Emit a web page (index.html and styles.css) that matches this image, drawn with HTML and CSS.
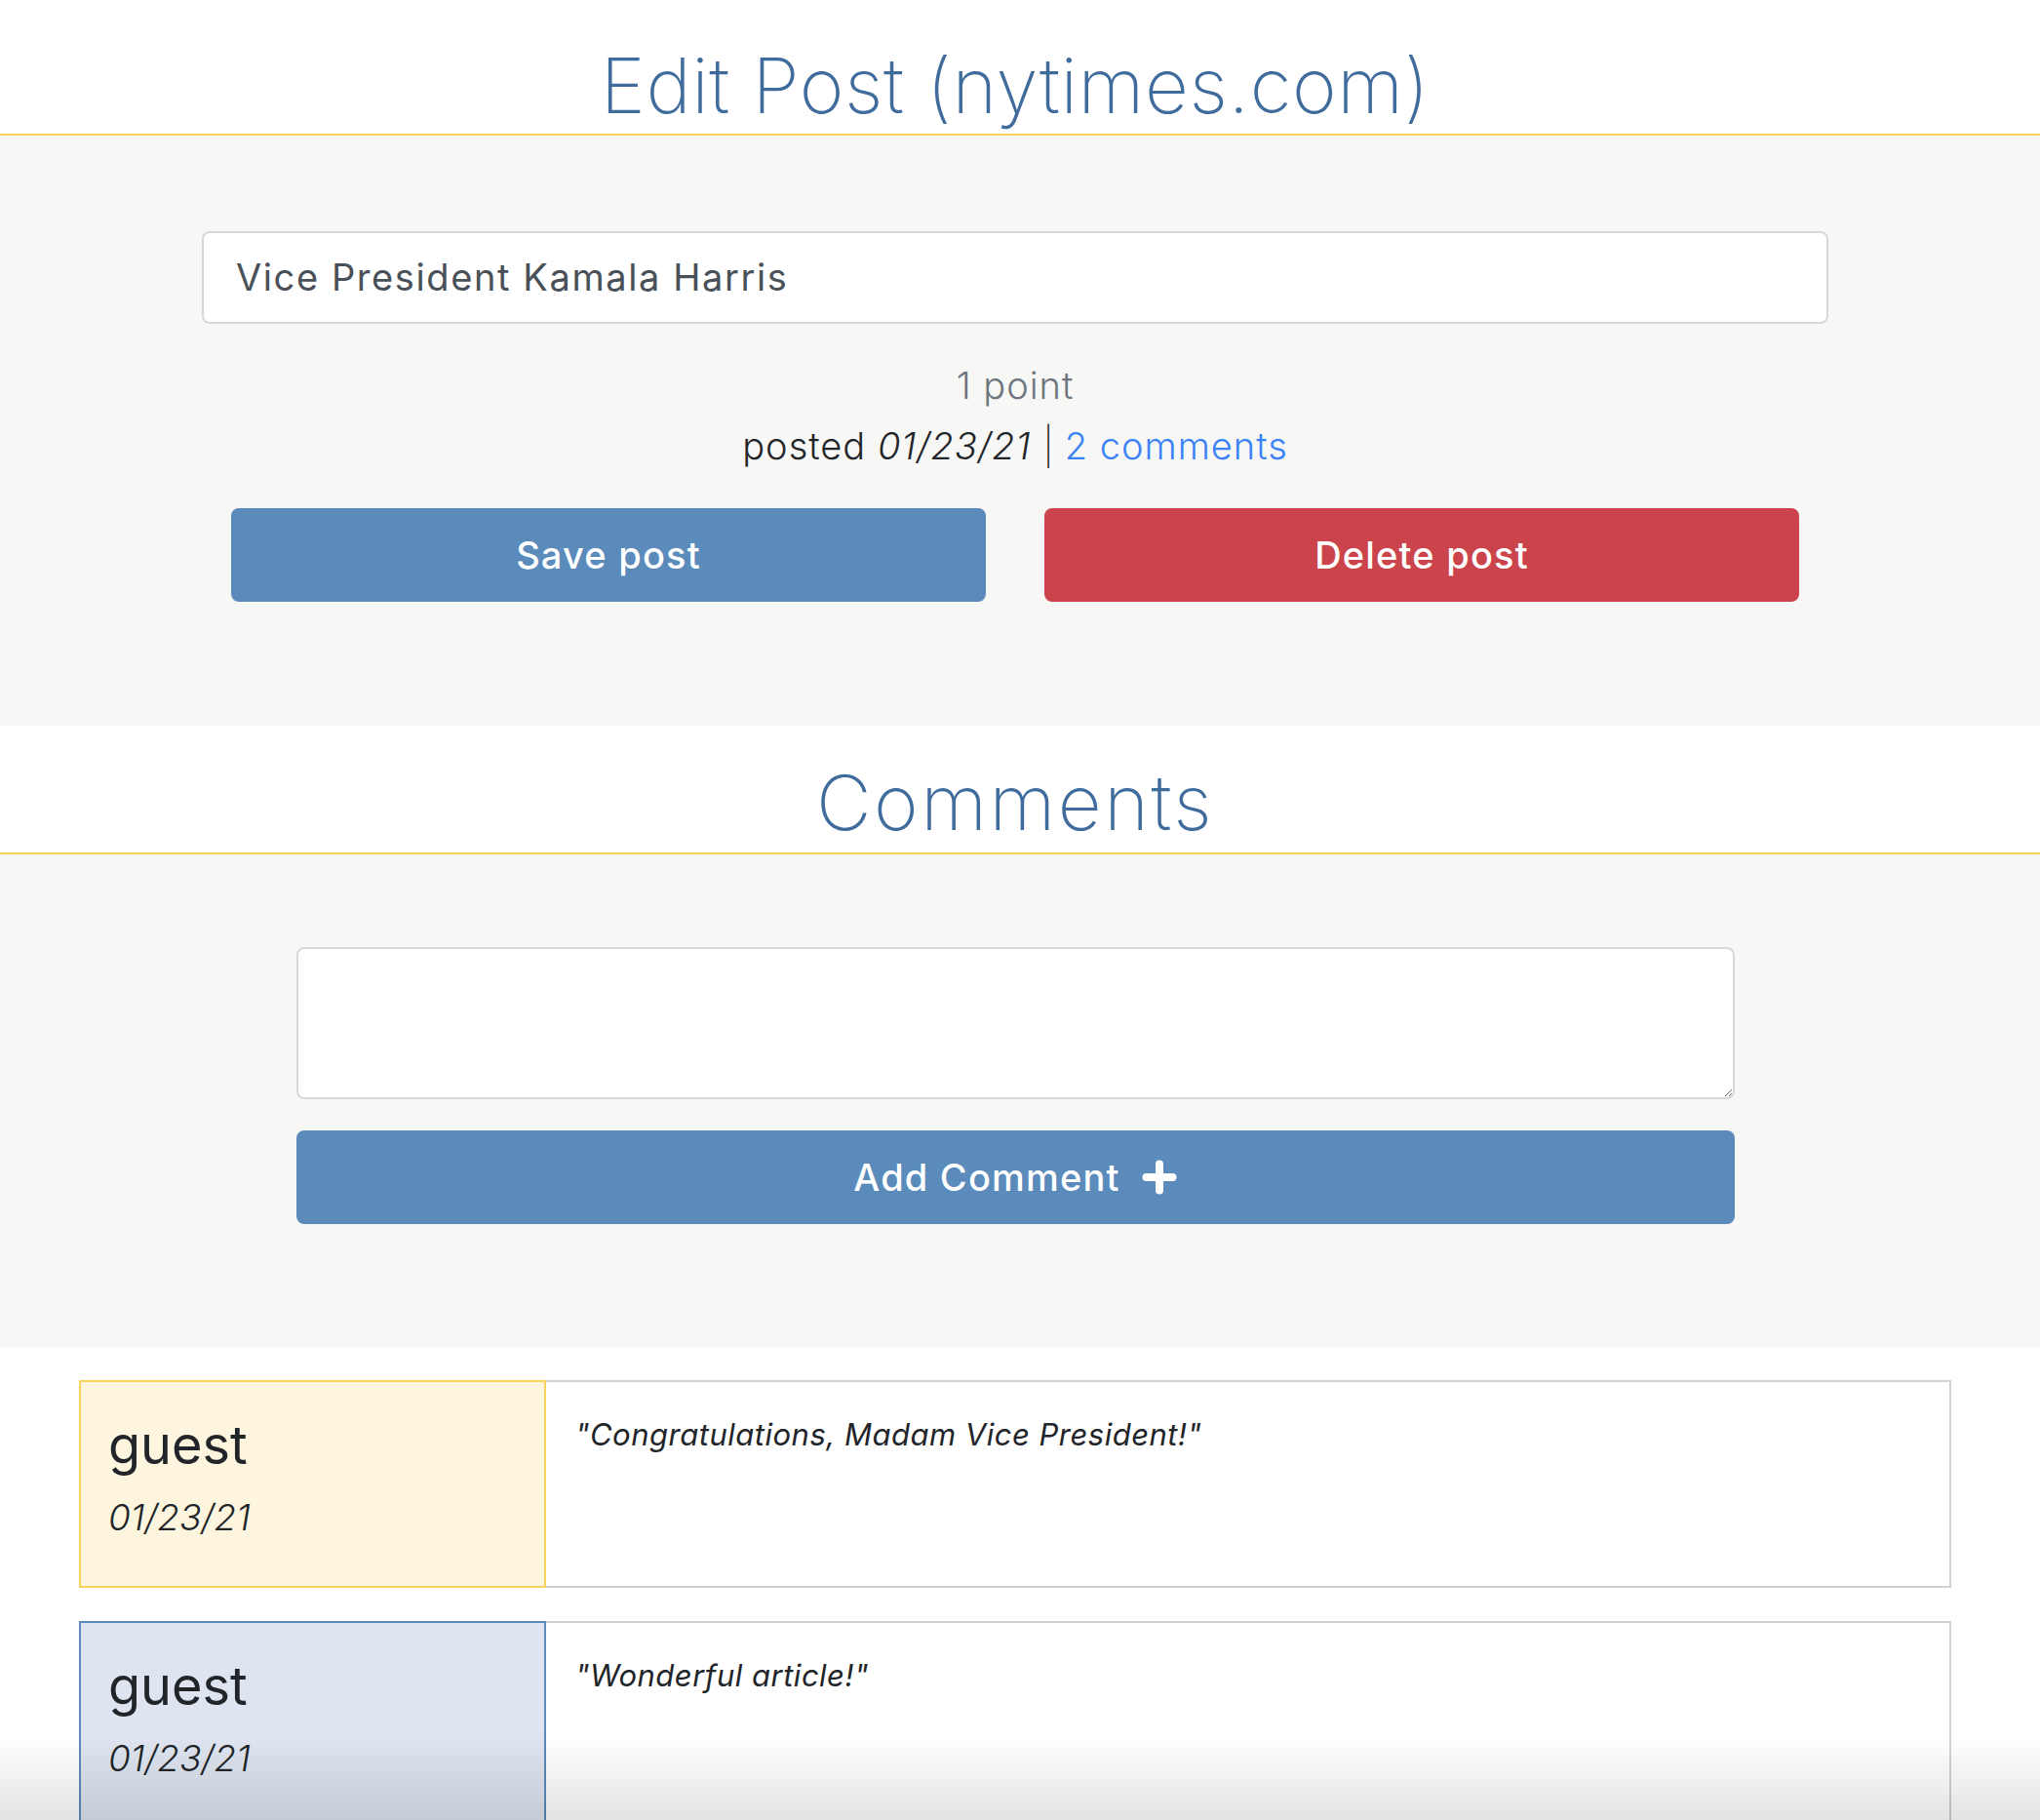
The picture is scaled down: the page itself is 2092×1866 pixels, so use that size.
FILE: index.html
```html
<!DOCTYPE html>
<html lang="en">
<head>
<meta charset="utf-8">
<title>Edit Post</title>
<link rel="stylesheet" href="styles.css">
</head>
<body>
<header class="section-head">
  <h1 class="section-title">Edit Post (nytimes.com)</h1>
</header>
<section class="panel panel-post">
  <div class="post-inner">
    <div class="title-input">Vice President Kamala Harris</div>
    <div class="meta">
      <div class="points">1 point</div>
      <div class="posted">posted <em>01/23/21</em><span class="sep">|</span><a class="comments-link" href="#">2 comments</a></div>
    </div>
    <div class="btn-row">
      <button class="btn btn-blue">Save post</button>
      <button class="btn btn-red">Delete post</button>
    </div>
  </div>
</section>
<header class="section-head section-head-2">
  <h2 class="section-title section-title-wide">Comments</h2>
</header>
<section class="panel panel-comment">
  <div class="comment-form">
    <textarea class="comment-input"></textarea>
    <button class="btn btn-blue btn-add">Add Comment
      <svg class="plus" viewBox="0 0 36 36" width="36" height="36" aria-hidden="true"><path d="M18 4.5V31.5M4.5 18H31.5" stroke="#fff" stroke-width="8" stroke-linecap="round" fill="none"/></svg>
    </button>
  </div>
</section>
<main class="comment-list">
  <article class="comment comment-yellow">
    <div class="comment-author">
      <div class="author-name">guest</div>
      <div class="author-date">01/23/21</div>
    </div>
    <div class="comment-body">"Congratulations, Madam Vice President!"</div>
  </article>
  <article class="comment comment-blue">
    <div class="comment-author">
      <div class="author-name">guest</div>
      <div class="author-date">01/23/21</div>
    </div>
    <div class="comment-body">"Wonderful article!"</div>
  </article>
</main>
<div class="bottom-fade"></div>
</body>
</html>
```
FILE: styles.css
```css
* { box-sizing: border-box; }
html, body { margin: 0; padding: 0; }
body {
  background: #ffffff;
  font-family: Inter, "Noto Sans", "Liberation Sans", sans-serif;
  color: #212529;
  overflow: hidden;
}
.section-head {
  padding: 42px 10px 4px 0;
  border-bottom: 2px solid #f8d35c;
  text-align: center;
}
.section-head-2 { padding-top: 33px; padding-bottom: 6px; }
.section-title {
  margin: 0;
  font-size: 78px;
  line-height: 91px;
  font-weight: 200;
  color: #3f6c9c;
  letter-spacing: 0.6px;
}
.section-title-wide { letter-spacing: 2.5px; }
.panel {
  background: #f7f7f5;
  padding: 98px 10px 127px 0;
}
.panel-comment { padding-top: 95px; }
.post-inner {
  width: 1668px;
  margin: 0 auto;
}
.title-input {
  height: 95px;
  background: #fff;
  border: 2px solid #d5d8dc;
  border-radius: 8px;
  padding-left: 33px;
  font-size: 38px;
  line-height: 91px;
  color: #495057;
  letter-spacing: 1.6px;
}
.meta {
  margin-top: 32px;
  text-align: center;
  font-size: 38px;
  line-height: 62px;
  font-weight: 300;
  letter-spacing: 1px;
}
.points { color: #6c757d; }
.posted { color: #212529; }
.posted em { font-style: italic; }
.sep { margin: 0 10px 0 12px; font-weight: 200; }
.comments-link { color: #3b82f6; text-decoration: none; }
.btn-row {
  margin: 33px auto 0;
  width: 1608px;
  display: grid;
  grid-template-columns: 1fr 1fr;
  gap: 60px;
}
.btn {
  height: 96px;
  border: none;
  border-radius: 8px;
  color: #fff;
  font-family: Inter, "Noto Sans", sans-serif;
  font-size: 38px;
  font-weight: 500;
  letter-spacing: 1.2px;
  cursor: pointer;
}
.btn-blue { background: #5b8bbb; }
.btn-red { background: #cc444b; }
.comment-form {
  width: 1475px;
  margin: 0 auto;
  display: flex;
  flex-direction: column;
  gap: 32px;
}
.comment-input {
  display: block;
  width: 100%;
  height: 156px;
  border: 2px solid #d5d8dc;
  border-radius: 8px;
  background: #fff;
  resize: vertical;
  font-family: inherit;
}
.btn-add {
  width: 100%;
  display: flex;
  align-items: center;
  justify-content: center;
  gap: 22px;
}
.plus { display: block; }
.comment-list {
  padding: 33px 10px 0 0;
  display: flex;
  flex-direction: column;
  gap: 34px;
}
.comment {
  width: 1920px;
  margin: 0 auto;
  height: 213px;
  display: grid;
  grid-template-columns: 479px 1fr;
  border: 2px solid #d2d2d2;
  border-left: none;
}
.comment-author {
  margin: -2px 0;
  padding: 25px 28px 0;
}
.comment-yellow .comment-author { background: #fdf5de; border: 2px solid #f8d35c; }
.comment-blue .comment-author { background: #dee5f0; border: 2px solid #5b8bbb; }
.author-name {
  font-size: 54px;
  line-height: 80px;
  font-weight: 400;
  color: #212529;
}
.author-date {
  margin-top: 4px;
  font-size: 37px;
  line-height: 60px;
  font-weight: 300;
  font-style: italic;
  color: #212529;
}
.comment-body {
  padding: 26px 30px;
  font-size: 31px;
  line-height: 56px;
  font-style: italic;
  font-weight: 400;
  letter-spacing: 0.5px;
  color: #212529;
}
.bottom-fade {
  position: fixed;
  left: 0;
  right: 0;
  bottom: 0;
  height: 86px;
  background: linear-gradient(to bottom, rgba(0,0,0,0), rgba(0,0,0,0.11));
  pointer-events: none;
}
```
